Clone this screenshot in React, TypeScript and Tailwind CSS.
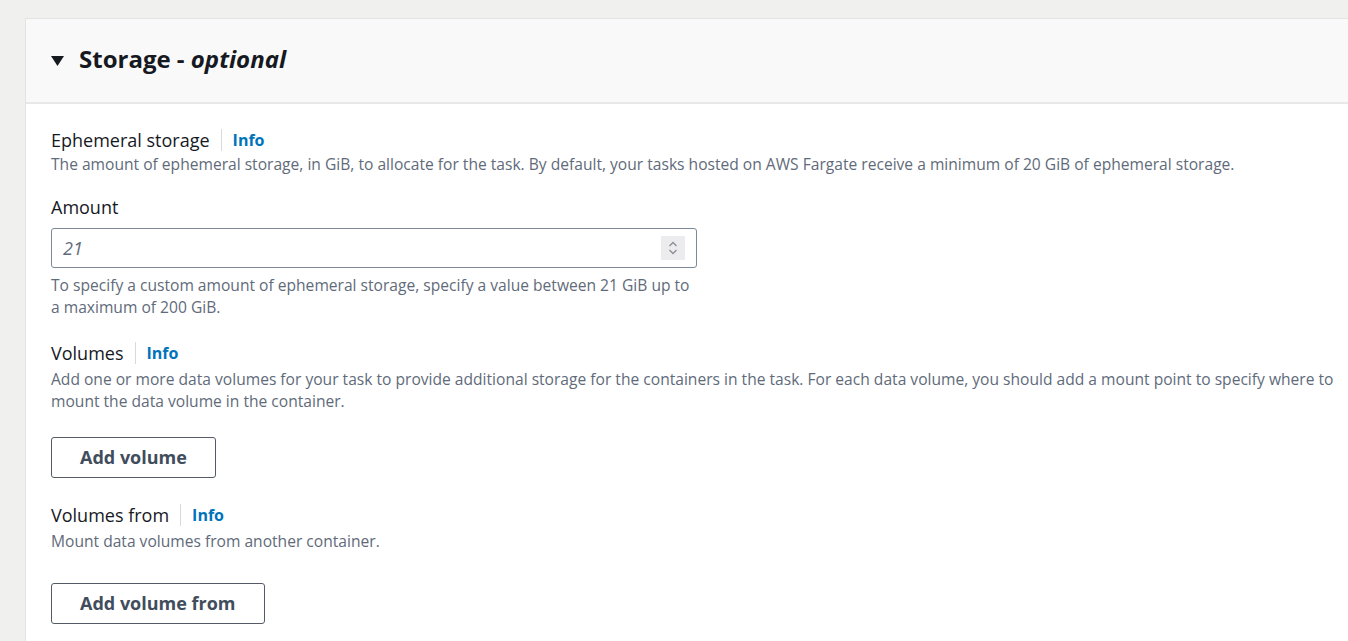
import { useState } from 'react'

function InfoLabel({ label }: { label: string }) {
  return (
    <div className="flex items-center">
      <span className="text-[18px] leading-[26px] text-[#16191f]">{label}</span>
      <span className="mx-[11px] h-[22px] w-px bg-[#d5dbdb]" />
      <a className="text-[16px] font-bold leading-[26px] text-[#0073bb]">Info</a>
    </div>
  )
}

function Description({ children }: { children: React.ReactNode }) {
  return <p className="text-[15.6px] leading-[22px] text-[#5f6b7a]">{children}</p>
}

function OutlineButton({ children }: { children: React.ReactNode }) {
  return (
    <button className="h-[41px] rounded-[3px] border border-[#545b64] bg-white px-[28px] text-[18px] font-bold text-[#414d5c]">
      {children}
    </button>
  )
}

export default function App() {
  const [amount, setAmount] = useState('')

  return (
    <div
      className="h-[641px] w-[1348px] overflow-hidden bg-[#f0f0ef] pl-[25px] pt-[18px]"
      style={{ fontFamily: '"Open Sans", "Noto Sans", sans-serif' }}
    >
      <div className="min-h-[700px] w-[1400px] border-l border-t border-[#e3e3e3] bg-white">
        <div className="flex h-[85px] items-center border-b-2 border-[#e8e8e8] bg-[#f9f9f9] pl-[25px]">
          <svg width="13" height="10" viewBox="0 0 13 10" className="mr-[15px]">
            <path d="M0 0 L13 0 L6.5 10 Z" fill="#16191f" />
          </svg>
          <h2 className="-mt-[3px] text-[24px] font-bold text-[#16191f]">
            Storage - <i>optional</i>
          </h2>
        </div>

        <div className="flex flex-col pl-[25px] pt-[23px]">
          <InfoLabel label="Ephemeral storage" />
          <Description>
            The amount of ephemeral storage, in GiB, to allocate for the task. By default, your tasks hosted on AWS
            Fargate receive a minimum of 20 GiB of ephemeral storage.
          </Description>

          <span className="mt-[19px] text-[18px] leading-[26px] text-[#16191f]">Amount</span>
          <div className="mt-[8px] flex h-[40px] w-[646px] items-center rounded-[3px] border border-[#7d8998] px-[11px]">
            <input
              type="text"
              value={amount}
              onChange={(e) => setAmount(e.target.value)}
              placeholder="21"
              className="flex-1 bg-transparent text-[18px] italic text-[#16191f] outline-none placeholder:text-[#5f6b7a]"
            />
            <div className="flex h-[24px] w-[24px] flex-col items-center justify-center bg-[#ececef]">
              <svg width="10" height="16" viewBox="0 0 10 16">
                <path d="M1.5 6 L5 2.5 L8.5 6" fill="none" stroke="#8a8f98" strokeWidth="1.3" />
                <path d="M1.5 10 L5 13.5 L8.5 10" fill="none" stroke="#8a8f98" strokeWidth="1.3" />
              </svg>
            </div>
          </div>
          <div className="mt-[6px] w-[646px]">
            <Description>
              To specify a custom amount of ephemeral storage, specify a value between 21 GiB up to a maximum of 200 GiB.
            </Description>
          </div>

          <div className="mt-[22px]">
            <InfoLabel label="Volumes" />
          </div>
          <div className="mt-[2px] w-[1290px]">
            <Description>
              Add one or more data volumes for your task to provide additional storage for the containers in the task. For
              each data volume, you should add a mount point to specify where to mount the data volume in the container.
            </Description>
          </div>
          <div className="mt-[25px]">
            <OutlineButton>Add volume</OutlineButton>
          </div>

          <div className="mt-[24px]">
            <InfoLabel label="Volumes from" />
          </div>
          <div className="mt-[2px]">
            <Description>Mount data volumes from another container.</Description>
          </div>
          <div className="mt-[31px]">
            <OutlineButton>Add volume from</OutlineButton>
          </div>
        </div>
      </div>
    </div>
  )
}
